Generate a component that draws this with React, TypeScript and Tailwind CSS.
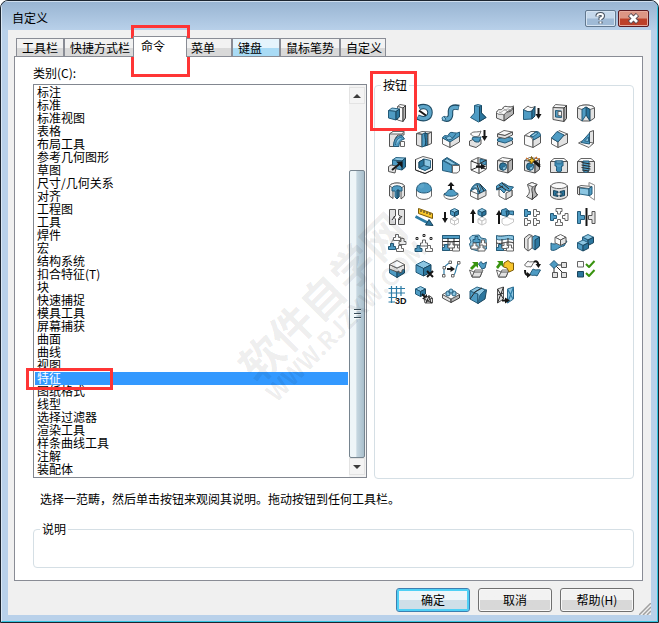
import { useState } from "react";

type Kind =
  | "b" | "l" | "d" | "g" | "w" | "m" | "k" | "K" | "s" | "y" | "n" | "N" | "f" | "U" | "T" | "o" | "a" | "A" | "S";

const styles: Record<Kind, { fill: string; stroke: string; strokeWidth: number }> = {
  b: { fill: "#4f9cc4", stroke: "#245a78", strokeWidth: 1 },
  l: { fill: "#8cc6e2", stroke: "#2b6585", strokeWidth: 1 },
  d: { fill: "#2b769e", stroke: "#1a455c", strokeWidth: 1 },
  g: { fill: "#e2e2e2", stroke: "#545454", strokeWidth: 1 },
  w: { fill: "#fafafa", stroke: "#666666", strokeWidth: 1 },
  m: { fill: "#b4b4b4", stroke: "#3a3a3a", strokeWidth: 1 },
  k: { fill: "none", stroke: "#2b2b2b", strokeWidth: 1 },
  K: { fill: "#161616", stroke: "none", strokeWidth: 0 },
  s: { fill: "none", stroke: "#2d7ca6", strokeWidth: 1.2 },
  S: { fill: "none", stroke: "#2d7ca6", strokeWidth: 2.6 },
  y: { fill: "#f7c52d", stroke: "#7b5a08", strokeWidth: 1 },
  n: { fill: "none", stroke: "#39930f", strokeWidth: 2 },
  N: { fill: "#39930f", stroke: "none", strokeWidth: 0 },
  f: { fill: "#ffffff", stroke: "#c6c6c6", strokeWidth: 1 },
  U: { fill: "none", stroke: "#1d4a63", strokeWidth: 5.5 },
  T: { fill: "none", stroke: "#5da5c9", strokeWidth: 3.4 },
  o: { fill: "none", stroke: "#d06a1c", strokeWidth: 1.3 },
  a: { fill: "none", stroke: "#161616", strokeWidth: 2 },
  A: { fill: "none", stroke: "#9a9a9a", strokeWidth: 1 },
};

type Shape = [Kind, string];
type Icon = { name: string; shapes: Shape[]; label?: string };

// Small isometric cube of size s with its bounding box at (x, y).
const cube = (x: number, y: number, s: number, top: Kind, front: Kind, side: Kind): Shape[] => {
  const t = s / 4;
  return [
    [top, `M${x} ${y + t}L${x + s / 2} ${y}L${x + s} ${y + t}L${x + s / 2} ${y + 2 * t}Z`],
    [front, `M${x} ${y + t}L${x + s / 2} ${y + 2 * t}V${y + s}L${x} ${y + s - t}Z`],
    [side, `M${x + s / 2} ${y + 2 * t}L${x + s} ${y + t}V${y + s - t}L${x + s / 2} ${y + s}Z`],
  ];
};

// Upright stud used by the pattern commands.
const stud = (x: number, y: number, kind: Kind): Shape => [
  kind,
  `M${x + 2} ${y}H${x + 5}V${y + 3}H${x + 7}V${y + 6}H${x}V${y + 3}H${x + 2}Z`,
];

// Stud turned on its side, pointing right.
const sideStud = (x: number, y: number, kind: Kind): Shape => [
  kind,
  `M${x} ${y}H${x + 3}V${y + 2}H${x + 6}V${y + 5}H${x + 3}V${y + 7}H${x}Z`,
];

const downArrow = (x: number, y: number): Shape[] => [
  ["a", `M${x} ${y}V${y + 8}`],
  ["K", `M${x - 3} ${y + 6}H${x + 3}L${x} ${y + 11}Z`],
];

const upArrow = (x: number, y: number): Shape[] => [
  ["a", `M${x} ${y + 4}V${y + 14}`],
  ["K", `M${x - 3} ${y + 5}H${x + 3}L${x} ${y}Z`],
];

const holeCube: Shape[] = [
  ["w", "M1.500 4.500 6.500 1.500 16.500 3 12 6Z"],
  ["g", "M1.500 4.500 12 6V17L1.500 14.500Z"],
  ["m", "M12 6 16.500 3V13.500L12 17Z"],
  ["d", "M3.500 10.500A3.500 3.700 0 1 1 10.500 10.500A3.500 3.700 0 1 1 3.500 10.500Z"],
  ["l", "M6 11Q9 12 10 8Q11 14 7 14Z"],
];

const icons: Icon[] = [
  {
    name: "拉伸凸台/基体",
    shapes: [
      ["w", "M9.500 2.500 12 .5 17.500 1.500 15 4Z"],
      ["w", "M9.500 2.500 15 4V17.500L9.500 16Z"],
      ["m", "M15 4 17.500 1.500V14L15 17.500Z"],
      ["l", "M.5 6.500 4 4 11.500 5 8 7.500Z"],
      ["b", "M.5 6.500 8 7.500V16L.5 14Z"],
      ["d", "M8 7.500 11.500 5V13L8 16Z"],
    ],
  },
  {
    name: "旋转凸台/基体",
    shapes: [
      ["U", "M4 3.500C9 1 15 3 15 8.500S9 16.500 2.500 13"],
      ["T", "M4.500 3.500C9 1.500 15 3 15 8.500S9 16.500 3 13"],
      ["a", "M4 6.500 11 11.500"],
    ],
  },
  {
    name: "扫描",
    shapes: [
      ["U", "M1 14C6 17 9 14 8.500 9S11 2 17 3.500"],
      ["T", "M1.500 14C6 16.500 9 14 8.500 9S11 2.500 16.500 3.800"],
      ["l", "M1.500 12.500A2 2 0 1 0 4 15Z"],
    ],
  },
  {
    name: "放样凸台/基体",
    shapes: [
      ["b", "M5.500 1.500H12.500L12.500 9 17 13.500 9.500 18 1.500 13.500 5.500 9Z"],
      ["d", "M10.500 2 12.500 1.500 12.500 9 17 13.500 10.500 17.500Z"],
      ["l", "M5.500 1.500 9 .5 12.500 1.500 9.500 2.500Z"],
    ],
  },
  {
    name: "边界凸台/基体",
    shapes: [
      ["g", "M.5 8.500C3 3 5 8 7 4 9 0 13 5 17.500 2V9L8 17 .5 14Z"],
      ["m", "M8 11C11 5 14 11 17.500 3V10L8 17Z"],
      ["w", "M.5 8.500C3 3 5 8 7 4 9 0 13 5 17.500 2 15 8 12 5 8 11 5 9 3 12 .5 8.500Z"],
      ["A", "M3 8C6 10 7 4 11 7M7 4C9 8 12 3 14 6"],
    ],
  },
  {
    name: "加厚",
    shapes: [
      ["w", "M.5 5.500 5 2C7 4 9 4 12 2.500L9 7C6 8 4 8 .5 5.500Z"],
      ["b", "M.5 5.500C4 8 6 8 9 7V15L.5 15.500Z"],
      ["d", "M9 7 12 2.500V12L9 15Z"],
      ...downArrow(15.5, 4),
    ],
  },
  {
    name: "拉伸切除",
    shapes: [
      ["w", "M3 3.500 5.500.5 16.500 1.500 14 4Z"],
      ["g", "M3 3.500 14 4V17.500L3 15.500Z"],
      ["m", "M14 4 16.500 1.500V14.500L14 17.500Z"],
      ["b", "M5.500 6.500 11.500 7V13.500L5.500 13Z"],
      ["w", "M8 7.500H11.500V12L8 11.500Z"],
    ],
  },
  {
    name: "旋转切除",
    shapes: [
      ["g", "M.5 4C1 0 17 0 17.500 4V14L13 17H5L.5 14Z"],
      ["w", "M.5 4C1 0 17 0 17.500 4L13 5.500 9 3 5 5.500Z"],
      ["d", "M9 3 13 5.500V17L9 11Z"],
      ["b", "M9 3 5 5.500V17L9 11Z"],
    ],
  },
  {
    name: "扫描切除",
    shapes: [
      ["g", "M1.500 4 5 1.500H16V5H10C7 7 6 11 6 16.500H1.500Z"],
      ["w", "M1.500 4 5 1.500H16L14 4Z"],
      ["b", "M5.500 16.500C5.500 9 9 5.500 14 5.500L16.500 9C12 10 11 13 11 16.500Z"],
      ["l", "M7.500 15C8 10 10 8 14 7"],
      ["w", "M12.500 11.500H16.500V16.500H12.500Z"],
    ],
  },
  {
    name: "放样切割",
    shapes: [
      ["w", "M1.500 3.500 7 1.500 16.500 2 11 4.500Z"],
      ["g", "M1.500 3.500 7 4.500V17L1.500 15Z"],
      ["b", "M7 4.500 10.500 2.500C10 8 12 11 10 16L7 17Z"],
      ["d", "M10 3 13 4C12 9 13 12 13 15L10 16C12 10 9 8 10 3Z"],
      ["g", "M13 4 16.500 2V13.500L13 15Z"],
    ],
  },
  {
    name: "边界切除",
    shapes: [
      ["w", "M.5 8 8 11V17.500L.5 14Z"],
      ["g", "M8 11 17.500 5V12L8 17.500Z"],
      ["b", "M.5 8C3 3 5 8 7 4 9 0 13 5 17.500 2V6L8 12Z"],
      ["l", "M3 7C5 9 7 4 9 7S12 5 14 4L10 9 6 10Z"],
    ],
  },
  {
    name: "加厚切除",
    shapes: [
      ["w", "M1.500 4C4 .5 8 3 12 1L10 6C6 7 4 7 1.500 4Z"],
      ["g", "M.5 11 4 9.500C6 13 9 12 12 9.500V14L7 17.500.5 15.500Z"],
      ["b", "M3 8C6 6 8 8 12 7L10 12C7 12 5 12 3 8Z"],
      ...downArrow(15.5, 0),
    ],
  },
  {
    name: "分割",
    shapes: [
      ["g", "M1.500 12 9 9 16.500 11V14L9 17.500 1.500 15Z"],
      ["b", "M1.500 9 8 7 16.500 8V10L9 13 1.500 11Z"],
      ["w", "M1.500 4 8 .5 16.500 2 9 5.500Z"],
      ["g", "M1.500 4 9 5.500 16.500 2V5L9 8.500 1.500 7Z"],
    ],
  },
  {
    name: "圆角",
    shapes: [
      ["w", "M1.500 5.500 8 1.500H14L8 7Z"],
      ["w", "M1.500 5.500 8 7 10 10V17.500L1.500 14.500Z"],
      ["g", "M10 10 17.500 6V13L10 17.500Z"],
      ["b", "M7 6 13 1.500C16 1.500 17.500 3 17.500 6L10.500 10C10.500 8 9 6 7 6Z"],
      ["l", "M8 5.500 13 2 15 3 10 7Z"],
    ],
  },
  {
    name: "倒角",
    shapes: [
      ["w", "M7 2.500 9 .5 17.500 4 15 6Z"],
      ["w", "M1.500 8 8 12V17.500L1.500 14Z"],
      ["g", "M8 12 13 6 17.500 4V13L8 17.500Z"],
      ["b", "M1.500 8 7 1.500 14 5 8 12Z"],
    ],
  },
  {
    name: "筋",
    shapes: [
      ["g", "M12.500 2 16.500.5V13.500L12.500 16Z"],
      ["w", "M1.500 13 5 11 16.500 13 12 17.500Z"],
      ["b", "M12.500 3V14L4 12.500Z"],
      ["l", "M11.500 7V11.500L7.500 11Z"],
    ],
  },
  {
    name: "比例缩放",
    shapes: [
      ["l", "M4.500 4 8 1.500 17.500 2 14 5Z"],
      ["b", "M4.500 4 14 5V14L4.500 12Z"],
      ["d", "M14 5 17.500 2V11L14 14Z"],
      ["g", "M.5 10.500 3 9 8.500 10 7 17 .5 15.500Z"],
      ["a", "M4 14 12 7.500"],
      ["K", "M8 5.500H14.500V12Z"],
    ],
  },
  {
    name: "抽壳",
    shapes: [
      ["w", "M.5 3.500 8 .5 17.500 3V14L10 17.500 .5 14Z"],
      ["l", "M4 6 9 3 15.500 4.500V12L10 14 4 12Z"],
      ["d", "M4 6 9 3V9.500L4 12Z"],
      ["b", "M4 12 9 9.500 15.500 11.500 10 14.500Z"],
      ["k", "M.5 3.500V14L10 17.500 17.500 14V3"],
    ],
  },
  {
    name: "拔模",
    shapes: [
      ["b", "M.5 4.500 5 1.500 17.500 9 9.500 9.500Z"],
      ["b", "M.5 4.500 10 9.500V16.500L.5 14.500Z"],
      ["l", "M2 4.500 5 2.500 15 8.500 10 9Z"],
      ["w", "M10.500 9.500H17.500V15L15 17H10.500Z"],
    ],
  },
  {
    name: "移动面",
    shapes: [
      ["w", "M2 5 9 1.500 17.500 4V13L10 17.500 2 14Z"],
      ["b", "M11 3 17 4.500V9L11 7Z"],
      ["k", "M2 5 10 8 17.500 4M10 8V17.500M9 2V11L2 14M9 11 17 13"],
      ["a", "M7 10.500H13"],
      ["K", "M12 7.500 17 10.500 12 13.500Z"],
    ],
  },
  { name: "简单直孔", shapes: holeCube },
  {
    name: "异型孔向导",
    shapes: [
      ...holeCube,
      ["a", "M9 4 17 11"],
      ["a", "M10.500 4 17 9.500"],
      ["y", "M8.500.5 10 3.500 12 4 9.500 6 8 8 7.500 5.500 5 4 8 3.500Z"],
      ["o", "M3 2 5 3M14 1 12 2.500M15 3.500 17 3"],
    ],
  },
  {
    name: "高级孔",
    shapes: [
      ["w", "M.5 5.500 4 2.500H14L17.500 5.500Z"],
      ["g", "M.5 5.500H17.500V16.500H.5Z"],
      ["b", "M5 5H13V10H11.500V15L9 16 6.500 15V10H5Z"],
      ["l", "M6 5H12V7H6Z"],
      ["s", "M5 8H13M6 12H12M7 14H11"],
    ],
  },
  {
    name: "螺纹线",
    shapes: [
      ["w", "M.5 5.500 4 2.500H14L17.500 5.500Z"],
      ["g", "M.5 5.500H17.500V16.500H.5Z"],
      ["b", "M6 5H12V15L9 16.500 6 15Z"],
      ["k", "M4.500 6.500 13.500 8M4.500 9 13.500 10.500M4.500 11.500 13.500 13M5.500 14 12 15"],
    ],
  },
  {
    name: "装饰凸缘",
    shapes: [
      ["g", "M1.500 4C3 0 15 0 16.500 4V14L13 17V8H5V16.500L1.500 14Z"],
      ["w", "M1.500 4C3 0 15 0 16.500 4L13 6H5Z"],
      ["b", "M4 6C5 3 13 3 14 6V9H11V15L9 17 7 15V9H4Z"],
      ["d", "M9 8H11V15L9 17Z"],
    ],
  },
  {
    name: "圆顶",
    shapes: [
      ["w", "M1.500 8V14C4 18.500 14 18.500 16.500 14V8Z"],
      ["b", "M1.500 8C1.500-1.500 16.500-1.500 16.500 8 14 12 4 12 1.500 8Z"],
      ["T", "M5 6C6 4 7 3.500 9 3.500"],
    ],
  },
  {
    name: "自由形",
    shapes: [
      ["w", "M2 12V14.500C5 18.500 13 18.500 16 14V12Z"],
      ["b", "M2 12C6 11 5 7 9 7S12 11 16 11.500C14 15 5 15 2 12Z"],
      ["a", "M9 2V8"],
      ["K", "M5.500 4 9 0 12.500 4Z"],
    ],
  },
  {
    name: "变形",
    shapes: [
      ["w", "M1.500 9 9 12V17.500L1.500 14Z"],
      ["g", "M9 12 17 8V13.500L9 17.500Z"],
      ["b", "M1.500 9C3 4 7 0 11 2L17 8 9 12C9 7 7 6 5 7Z"],
      ["l", "M3 7C5 3 8 2 10 3L12 8 9 10C9 6 7 5 5 6Z"],
      ["k", "M8 3 11 11M11 2 15 9"],
    ],
  },
  {
    name: "压凹",
    shapes: [
      ["w", "M3 8 9 6 16 8V14L9 17.500 3 14Z"],
      ["g", "M10 11 16 8V14L10 17.500Z"],
      ["b", "M.5 4 6 .5C8 2 10 2 12 4L17.500 5 14 9 10 8 8 11 4 7 .5 8Z"],
      ["k", "M3 3 10 8M6 1 13 7M1 7 7 4"],
    ],
  },
  {
    name: "弯曲",
    shapes: [
      ["g", "M4.500 2.500 9 .5 14 2.500C10 7 12 10 14.500 13L9 17.500 3.500 14.500C9 10 5 6 4.500 2.500Z"],
      ["m", "M10 4 14 2.500C10 7 12 10 14.500 13L9 17.500C11 10 7 9 10 4Z"],
      ["w", "M4.500 2.500 9 .5 14 2.500 10 5Z"],
    ],
  },
  {
    name: "包覆",
    shapes: [
      ["g", "M.5 4V14C4 18.500 14 18.500 17.500 14V4Z"],
      ["w", "M.5 4C3-.5 15-.5 17.500 4 14 7.500 4 7.500 .5 4Z"],
      ["d", "M3.500 8.500 8 9.500V11H6V13H8V14.500L3.500 13.500Z"],
      ["d", "M10 9.500 14.500 8.500V13.500L10 14.500V13H12V11H10Z"],
    ],
  },
  {
    name: "相交",
    shapes: [
      ["f", "M12 .5 17.500 3V18L12 14Z"],
      ["w", "M.5 5 4 3.500 15 4.500 12 6.500Z"],
      ["l", "M2.500 6 12 7V13.500L2.500 12Z"],
      ["g", "M.5 5 2.500 5.500V13L.5 12Z"],
      ["b", "M12 6.500 15 4.500V12L12 14Z"],
      ["A", "M12 4V.5L17.500 3V18L12.500 14.500"],
    ],
  },
  {
    name: "分型",
    shapes: [
      ["g", "M1.500 1.500H7.500V8L5.500 9 7.500 11V16.500H1.500Z"],
      ["g", "M10.500 1.500H16.500V16.500H10.500V11L12.500 8 10.500 7Z"],
      ["k", "M4 12 7 8M11 12 14 8"],
    ],
  },
  {
    name: "Instant3D",
    shapes: [
      ["y", "M3.500.5 17.500 5.500V10.500L3.500 5.500Z"],
      ["k", "M6 2V4M9 3V5M12 4V6M15 5V7"],
      ["S", "M.5 8.500 13 15"],
      ["d", "M14 11.500 18 17.500 10.500 17Z"],
    ],
  },
  { name: "退回", shapes: [...downArrow(3, 4), ...cube(8.5, 9, 8, "f", "f", "f"), ...cube(8.5, 0.5, 8, "l", "b", "d")] },
  { name: "往前", shapes: [...upArrow(4, 1), ...cube(9, 9, 8, "f", "f", "f"), ...cube(9, 0.5, 8, "l", "b", "d")] },
  {
    name: "移动至末尾",
    shapes: [
      ...upArrow(3, 2),
      ["f", "M6 11 11 9 15 11H17.500V14L12 17H8L6 15Z"],
      ["b", "M5.500 2 10 .5 13 3H17.500V7L13 6 11 8.500 5.500 7Z"],
      ["d", "M10 3 13 3V6L11 8.500Z"],
    ],
  },
  { name: "线性阵列", shapes: [sideStud(1.5, 1.5, "b"), sideStud(10.5, 1.5, "w"), sideStud(1.5, 10.5, "w"), sideStud(10.5, 10.5, "w")] },
  {
    name: "圆周阵列",
    shapes: [
      ["w", "M6 .5H12V3.500H10.500V6H7.500V3.500H6Z"],
      stud(5.5, 11.5, "w"),
      sideStud(0.5, 5.5, "b"),
      ["w", "M18 5.500H15V7.500H12.500V10.500H15V12.500H18Z"],
    ],
  },
  {
    name: "镜向",
    shapes: [
      ["b", "M.5 3.500H3.500V7.500H7.500V11.500H3.500V15.500H.5Z"],
      ["a", "M9.500 0V18"],
      ["g", "M18 3.500H15V7.500H11.500V11.500H15V15.500H18Z"],
    ],
  },
  {
    name: "曲线驱动的阵列",
    shapes: [["A", "M3 12C4 2 10 0 16 5L12 16"], stud(5.5, 0.5, "w"), stud(11, 4.5, "w"), stud(0.5, 9.5, "b"), stud(8.5, 11.5, "w")],
  },
  {
    name: "草图驱动的阵列",
    shapes: [
      ["k", "M1 3.500H3V5.500H1ZM8 .5H10V2.500H8ZM15 3.500H17V5.500H15Z"],
      stud(5.5, 6, "w"),
      stud(0, 11.5, "b"),
      stud(10.5, 11.5, "w"),
    ],
  },
  {
    name: "表格驱动的阵列",
    shapes: [
      ["w", "M.5 1.500H17.500V16.500H.5Z"],
      ["b", "M.5 1.500H17.500V4.500H.5Z"],
      ["k", "M.5 7.500H17.500M.5 11H17.500M6 4V12M12 4V12"],
      stud(0.5, 10.5, "b"),
      stud(6, 8, "w"),
      stud(10.5, 11, "w"),
    ],
  },
  {
    name: "填充阵列",
    shapes: [
      ["l", "M3 1.500 10 1 12 4 17 5 17.500 15 9 17 2 15 .5 10 2 8 .5 4Z"],
      stud(4, 2.5, "b"),
      stud(10.5, 6, "w"),
      stud(2, 9, "w"),
      stud(9, 11, "w"),
    ],
  },
  {
    name: "变化的阵列",
    shapes: [
      ["w", "M.5 2V16.500H17.500V2Z"],
      ["l", "M.5 1.500C6 4 10 0 17.500 2V6C10 3 6 8 .5 5Z"],
      ["k", "M.5 9C6 11 11 6 17.500 9M6 5V12M12 4V12"],
      stud(0.5, 10.5, "b"),
      stud(6, 8.5, "w"),
      stud(10.5, 11, "w"),
    ],
  },
  {
    name: "分割线",
    shapes: [
      ["b", "M8 4 12 1.500 16.500 3V12L12 16 8 13Z"],
      ["d", "M12 6 16.500 3V12L12 16Z"],
      ["g", "M1.500 4 6 .5 9 1.500V14L5 17 1.500 14Z"],
      ["w", "M5 5 9 1.500V14L5 17Z"],
    ],
  },
  {
    name: "曲面切除",
    shapes: [
      ["b", "M1 9C5 12 9 7 17 7L14 12C9 12 6 18 1 16Z"],
      ...cube(5, 0.5, 11, "w", "w", "g"),
    ],
  },
  { name: "组合", shapes: [...cube(5.5, 0.5, 11, "l", "b", "d"), ...cube(0.5, 6, 11, "l", "b", "d")] },
  {
    name: "分割实体",
    shapes: [
      ["b", "M1.500 5V13L9 17.500V8Z"],
      ["d", "M9 8V17.500L16.500 13V5Z"],
      ["g", "M1.500 4.500 9 8 16.500 4.500V9L14 10V12L11 13V11L9 12 1.500 9Z"],
      ["w", "M1.500 4.500 9 .5 16.500 4.500 9 8Z"],
    ],
  },
  { name: "删除实体", shapes: [...cube(1, 1, 15, "l", "b", "d"), ["a", "M12 11 18 17M18 11 12 17"]] },
  {
    name: "通过参考点的曲线",
    shapes: [
      ["s", "M2 16V8C5 3 6 5 8 2M11 16C15 13 13 6 17 3"],
      ["w", "M.5 14.500H3V17H.5ZM1 6.500H3.500V9H1ZM7 1H9.500V3.500H7ZM9.500 14.500H12V17H9.500ZM15.500 1.500H18V4H15.500Z"],
      ["a", "M5 9H10"],
      ["K", "M8.500 6 13 9 8.500 12Z"],
    ],
  },
  {
    name: "插入零件",
    shapes: [
      ["N", "M3 2H9V8L7 6 3 10 1 8 5 4Z"],
      ["w", "M.5 10 3 17H11L14 10H6L5 12Z"],
      ["g", "M3 17 5 12H13L11 17Z"],
      ["b", "M9.500 4 12 1.500 14 4 17.500 2 16 8 13 9Z"],
    ],
  },
  {
    name: "移动/复制实体",
    shapes: [
      ["N", "M1 1H7V7L5 5 2 9 0 7 3 3Z"],
      ["w", "M.5 10 2.500 17H10L13 10H6L5 12Z"],
      ["g", "M2.500 17 5 12H12L10 17Z"],
      ["y", "M8 3 12 .5 15 3H17.500V10L13 12 11 8 7.500 7Z"],
    ],
  },
  {
    name: "替换面",
    shapes: [
      ["w", "M1.500 5 5 1C7 3 9 1 11 2L8 7C5 6 4 8 1.500 5Z"],
      ["b", "M7 14 10 9C13 11 15 9 17.500 10L14 16C11 14 9 17 7 14Z"],
      ["a", "M11 2C14 0 15 3 15.500 5M2 10C2 14 3 15 5 15"],
      ["K", "M12.500 4H18L15.500 8ZM4 12 8 15 4 18Z"],
    ],
  },
  {
    name: "特征驱动",
    shapes: [
      ["k", "M5 5H12M5 5 12 12M4 5V12"],
      ["b", "M4 .5 8 4.500 4 8.500 0 4.500Z"],
      ["g", "M11.500 2.500H16.500V7.500H11.500ZM2.500 12.500H7.500V17.500H2.500ZM11.500 12.500H16.500V17.500H11.500Z"],
    ],
  },
  {
    name: "FeatureWorks 选项",
    shapes: [
      ["w", "M.5 1.500H6.500V7H.5Z"],
      ["d", "M.5 11.500H6.500V17H.5Z"],
      ["n", "M9 4 12 7 17.500 1M9 13 12 16 17.500 10"],
    ],
  },
  { name: "3D 草图网格", label: "3D", shapes: [["s", "M.5 2.500H17M.5 7H17M.5 11.500H9M.5 16H7M3.500 0V17M8.500 0V11M13 0V10"]] },
  {
    name: "转换到网格实体",
    shapes: [
      ...cube(0.5, 0.5, 10, "l", "b", "d"),
      ["a", "M7 8 11 12"],
      ["K", "M12 8V13H7Z"],
      ["g", "M9 13 14 9.500 17.500 12V17H10Z"],
      ["k", "M9 13 17 17M14 10 11 17M17 12 11 16M14 10 16 17"],
    ],
  },
  {
    name: "凸台阵列",
    shapes: [
      ["g", "M.5 8.500 9 13V16.500L.5 12Z"],
      ["m", "M9 13 17.500 8.500V12L9 16.500Z"],
      ["w", "M.5 8.500 9 4 17.500 8.500 9 13Z"],
      ["l", "M4 7A2 2 0 0 1 8 7V9L6 10 4 9ZM7 5A2 2 0 0 1 11 5V7H7ZM10 7A2 2 0 0 1 14 7V9L12 10 10 9Z"],
    ],
  },
  {
    name: "修复面",
    shapes: [
      ["b", "M1 5 9 8V17.500L1 13Z"],
      ["d", "M9 8 17.500 4 16 13 9 17.500Z"],
      ["l", "M1 5 8 1 17.500 4 9 8Z"],
      ["l", "M5 6.500 12 2 16 4 11 9 9 17V8Z"],
      ["k", "M1 13 6 6 13 2"],
    ],
  },
  {
    name: "对比网格",
    shapes: [
      ["g", "M1.500 3 7.500 1V13L1.500 17Z"],
      ["k", "M1.500 3 7.500 13M7.500 1 1.500 17M1.500 9 7.500 7"],
      ["l", "M11.500 3 17.500 1V13L11.500 17Z"],
      ["s", "M17.500 1 11.500 17M11.500 3 17 13"],
      ["a", "M6 14.500H10"],
      ["K", "M9 11.500 14 14.500 9 17.500Z"],
    ],
  },
];

const categories = [
  "标注", "标准", "标准视图", "表格", "布局工具", "参考几何图形", "草图", "尺寸/几何关系", "对齐", "工程图",
  "工具", "焊件", "宏", "结构系统", "扣合特征(T)", "块", "快速捕捉", "模具工具", "屏幕捕获", "曲面",
  "曲线", "视图", "特征", "图纸格式", "线型", "选择过滤器", "渲染工具", "样条曲线工具", "注解", "装配体",
];

const tabs = [
  { name: "工具栏", width: "w-12" },
  { name: "快捷方式栏", width: "w-[71px]" },
  { name: "命令", width: "w-[54px]" },
  { name: "菜单", width: "w-[47px]" },
  { name: "键盘", width: "w-12" },
  { name: "鼠标笔势", width: "w-[60px]" },
  { name: "自定义", width: "w-[46px]" },
];

function CommandIcon({ icon }: { icon: Icon }) {
  return (
    <svg width="18" height="18" viewBox="0 0 18 18" className="overflow-visible" strokeLinejoin="round" aria-hidden="true">
      {icon.shapes.map(([kind, d], i) => (
        <path key={i} d={d} {...styles[kind]} />
      ))}
      {icon.label && (
        <text x="7" y="18" fontSize="9" fontWeight="700" fill="#111" fontFamily="Liberation Sans, sans-serif">
          {icon.label}
        </text>
      )}
    </svg>
  );
}

function TitleBar() {
  return (
    <header className="flex h-7 items-start justify-between pl-2.5 pr-2">
      <h1 className="pt-2 leading-4">自定义</h1>
      <div className="flex gap-0.5 pt-2">
        <button
          type="button"
          aria-label="帮助"
          className="flex h-[17px] w-[31px] items-center justify-center rounded-xs border border-[#62788f] bg-linear-to-b from-[#c5d8eb] from-45% to-[#9fbad6] to-55% inset-ring inset-ring-[#d6e4f2]"
        >
          <svg width="11" height="13" viewBox="0 0 11 13" fill="none" aria-hidden="true">
            <path d="M2.500 4.500V3.500Q3 2 5.500 2T8 4Q8 5.500 5.500 6.500V8M5.500 9.500V11.500" stroke="#46525f" strokeWidth="4" />
            <path d="M2.500 4.500V3.500Q3 2 5.500 2T8 4Q8 5.500 5.500 6.500V8M5.500 9.500V11.500" stroke="#fff" strokeWidth="2" />
          </svg>
        </button>
        <button
          type="button"
          aria-label="关闭"
          className="flex h-[17px] w-[31px] items-center justify-center rounded-xs border border-[#5a1a22] bg-linear-to-b from-[#dc9584] from-45% to-[#bd4029] to-55% inset-ring inset-ring-[#e6aa9d]"
        >
          <svg width="13" height="11" viewBox="0 0 13 11" fill="none" aria-hidden="true">
            <path d="M2.500 1.500 10.500 9.500M10.500 1.500 2.500 9.500" stroke="#5b4a52" strokeWidth="4.600" />
            <path d="M3 2 10 9M10 2 3 9" stroke="#fff" strokeWidth="2.800" />
          </svg>
        </button>
      </div>
    </header>
  );
}

function ScrollBar() {
  return (
    <div className="flex w-[17px] shrink-0 flex-col bg-[#f3f3f3] py-0.5" aria-hidden="true">
      <div className="mr-px flex h-[17px] items-center justify-center border border-[#e3e3e3] bg-[#f4f4f4]">
        <svg width="8" height="4" viewBox="0 0 8 4">
          <path d="M4 0 8 4H0Z" fill="#3c3c3c" />
        </svg>
      </div>
      <div className="flex-[67_1_0px]" />
      <div className="mr-px flex flex-[288_1_0px] flex-col items-center justify-center gap-0.5 rounded-xs border border-[#76848f] bg-linear-to-r from-[#eef5f8] from-40% via-[#c5d6e0] via-50% to-[#a9bfcc]">
        <div className="h-0.5 w-[7px] border-t border-[#394c59] bg-white/70" />
        <div className="h-0.5 w-[7px] border-t border-[#394c59] bg-white/70" />
        <div className="h-0.5 w-[7px] border-t border-[#394c59] bg-white/70" />
      </div>
      <div className="mr-px flex h-[17px] items-center justify-center border border-[#e3e3e3] bg-[#f4f4f4]">
        <svg width="8" height="4" viewBox="0 0 8 4">
          <path d="M0 0H8L4 4Z" fill="#3c3c3c" />
        </svg>
      </div>
    </div>
  );
}

function CategoryList() {
  return (
    <div className="flex flex-1 flex-col">
      <label htmlFor="category" className="leading-4">
        类别(C):
      </label>
      <div className="mt-[3px] flex border border-[#828790] bg-white">
        <select
          id="category"
          size={30}
          defaultValue="特征"
          className="min-w-0 flex-1 appearance-none overflow-hidden bg-white bg-none px-px py-px outline-none"
        >
          {categories.map((name) => (
            <option
              key={name}
              value={name}
              className="flex h-[13px] min-h-0 items-center overflow-visible p-0 pb-0.5 pl-0.5 checked:bg-linear-to-b checked:from-[#3399ff] checked:to-[#3399ff] checked:[-webkit-text-fill-color:#ffffff]"
            >
              {name}
            </option>
          ))}
        </select>
        <ScrollBar />
      </div>
    </div>
  );
}

function CommandButtons() {
  return (
    <fieldset className="-mb-px mt-3 flex-1 rounded-sm border border-[#d5dfe5] px-1.5">
      <legend className="px-0.5 leading-4">按钮</legend>
      <div className="grid grid-cols-[repeat(8,27px)] pl-0.5 pt-[7px]">
        {icons.map((icon) => (
          <button key={icon.name} type="button" title={icon.name} aria-label={icon.name} className="flex h-[26px] items-center justify-center">
            <CommandIcon icon={icon} />
          </button>
        ))}
      </div>
    </fieldset>
  );
}

export default function App() {
  const [active, setActive] = useState("命令");

  return (
    <main className="relative overflow-hidden rounded-t-lg border border-[#1c2530] bg-[#b9d1ea] bg-linear-to-b from-[#98b4d2] to-[#b9d1ea] to-[30px] font-['Noto_Sans_CJK_SC',sans-serif] text-xs text-black">
      <div className="border-b border-r border-[#35c5e0] border-l border-l-[#dbe8f5] border-t border-t-[#cfdeee] pb-1.5">
        <TitleBar />
        <div className="relative mx-1.5 bg-[#f0f0f0] pb-[3px] pl-1.5 pr-2 pt-1.5">
          <div role="tablist" className="relative z-10 -mb-px flex h-[21px] items-end pl-0.5">
            {tabs.map((tab) => {
              const selected = tab.name === active;
              const look = selected
                ? "relative z-10 -mx-0.5 h-[21px] border-b-0 bg-white pb-[3px] pl-[7px]"
                : tab.name === "键盘"
                  ? "h-[19px] border-[#3c7fb1] bg-linear-to-b from-[#e5f4fc] from-50% to-[#a9dbf5] to-50% pl-[5px]"
                  : "h-[19px] bg-linear-to-b from-[#f2f2f2] from-50% to-[#d9d9d9] to-50% pl-[5px]";
              return (
                <button
                  key={tab.name}
                  type="button"
                  role="tab"
                  aria-selected={selected}
                  onClick={() => setActive(tab.name)}
                  className={`${tab.width} ${look} shrink-0 border border-[#898c95] text-left leading-4 whitespace-nowrap`}
                >
                  {tab.name}
                </button>
              );
            })}
          </div>

          <section className="border border-[#898c95] bg-white pb-3 pl-[18px] pr-2">
            <div className="flex gap-[7px]">
              <div className="flex flex-[334_1_0px] pt-2">
                <CategoryList />
              </div>
              <div className="flex flex-[260_1_0px] pt-2">
                <CommandButtons />
              </div>
            </div>
            <p className="mt-[13px] pl-[7px] leading-4">选择一范畴，然后单击按钮来观阅其说明。拖动按钮到任何工具栏。</p>
            <fieldset className="mt-3.5 rounded-sm border border-[#d5dfe5] px-1.5">
              <legend className="px-0.5 leading-4">说明</legend>
              <div className="h-[30px]" />
            </fieldset>
          </section>

          <footer className="mt-[7px] flex justify-end gap-2 pr-[9px]">
            <button
              type="button"
              className="h-6 w-[74px] rounded-[3px] border border-[#3c7fb1] bg-linear-to-b from-[#eef6fa] from-50% to-[#cfdfe8] to-50% inset-ring-2 inset-ring-[#4fd0f5]"
            >
              确定
            </button>
            {["取消", "帮助(H)"].map((name) => (
              <button
                key={name}
                type="button"
                className="h-6 w-[74px] rounded-[3px] border border-[#707070] bg-linear-to-b from-[#f2f2f2] from-50% to-[#d8d8d8] to-50% inset-ring inset-ring-[#f8f8f8]"
              >
                {name}
              </button>
            ))}
          </footer>
          <svg className="absolute bottom-0 right-0" width="12" height="12" viewBox="0 0 12 12" aria-hidden="true">
            <path d="M0 12 12 0M4 12 12 4M8 12 12 8" stroke="#a0a0a0" strokeWidth="1.500" />
          </svg>
        </div>
      </div>

      <div className="pointer-events-none absolute left-[213px] top-[268px] flex w-[230px] -rotate-45 flex-col items-center whitespace-nowrap font-bold text-black/8">
        <span className="text-[43px] leading-[46px]">软件自学网</span>
        <span className="text-2xl leading-6">WWW.RJZXW.COM</span>
      </div>
      <div className="pointer-events-none absolute left-[130px] top-6 h-[52px] w-[59px] border-3 border-[#ff3535]" />
      <div className="pointer-events-none absolute left-[369px] top-[70px] h-[60px] w-[47px] border-3 border-[#ff3535]" />
      <div className="pointer-events-none absolute left-[25px] top-[367px] h-[22px] w-[87px] border-3 border-[#ff3535]" />
    </main>
  );
}
